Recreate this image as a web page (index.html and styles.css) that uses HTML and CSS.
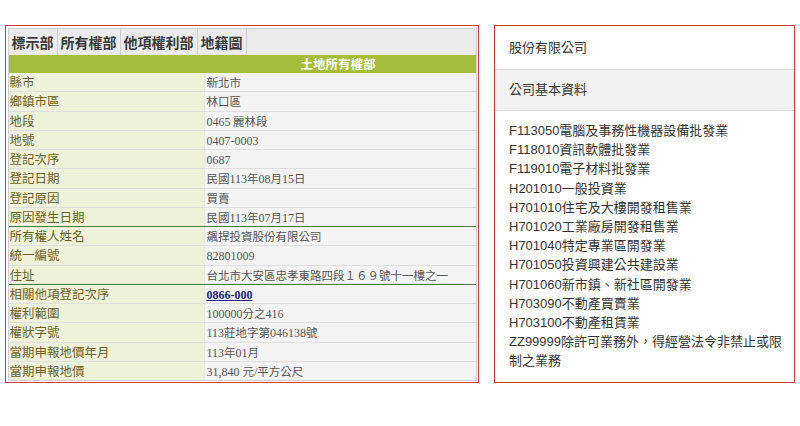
FILE: index.html
```html
<!DOCTYPE html>
<html lang="zh-Hant">
<head>
<meta charset="utf-8">
<link rel="stylesheet" href="styles.css">
</head>
<body>
<div class="page">
  <div class="panel left">
    <div class="frame">
      <div class="tabs">
        <div class="tab">標示部</div>
        <div class="tab">所有權部</div>
        <div class="tab">他項權利部</div>
        <div class="tab">地籍圖</div>
      </div>
      <div class="head">土地所有權部</div>
      <div class="rows">
        <div class="row"><div class="lab">縣市</div><div class="val">新北市</div></div>
        <div class="row"><div class="lab">鄉鎮市區</div><div class="val">林口區</div></div>
        <div class="row"><div class="lab">地段</div><div class="val"><span class="n">0465</span> 麗林段</div></div>
        <div class="row"><div class="lab">地號</div><div class="val"><span class="n">0407-0003</span></div></div>
        <div class="row"><div class="lab">登記次序</div><div class="val"><span class="n">0687</span></div></div>
        <div class="row"><div class="lab">登記日期</div><div class="val">民國<span class="n">113</span>年<span class="n">08</span>月<span class="n">15</span>日</div></div>
        <div class="row"><div class="lab">登記原因</div><div class="val">買賣</div></div>
        <div class="row"><div class="lab">原因發生日期</div><div class="val">民國<span class="n">113</span>年<span class="n">07</span>月<span class="n">17</span>日</div></div>
        <div class="row sep"><div class="lab">所有權人姓名</div><div class="val">飆捍投資股份有限公司</div></div>
        <div class="row"><div class="lab">統一編號</div><div class="val"><span class="n">82801009</span></div></div>
        <div class="row"><div class="lab">住址</div><div class="val">台北市大安區忠孝東路四段１６９號十一樓之一</div></div>
        <div class="row sep"><div class="lab">相關他項登記次序</div><div class="val"><a class="link n">0866-000</a></div></div>
        <div class="row"><div class="lab">權利範圍</div><div class="val"><span class="n">100000</span>分之<span class="n">416</span></div></div>
        <div class="row"><div class="lab">權狀字號</div><div class="val"><span class="n">113</span>莊地字第<span class="n">046138</span>號</div></div>
        <div class="row"><div class="lab">當期申報地價年月</div><div class="val"><span class="n">113</span>年<span class="n">01</span>月</div></div>
        <div class="row"><div class="lab">當期申報地價</div><div class="val"><span class="n">31,840 </span>元<span class="n">/</span>平方公尺</div></div>
      </div>
    </div>
  </div>
  <div class="panel right">
    <div class="item">股份有限公司</div>
    <div class="item gray">公司基本資料</div>
    <div class="list">
      <div>F113050電腦及事務性機器設備批發業</div>
      <div>F118010資訊軟體批發業</div>
      <div>F119010電子材料批發業</div>
      <div>H201010一般投資業</div>
      <div>H701010住宅及大樓開發租售業</div>
      <div>H701020工業廠房開發租售業</div>
      <div>H701040特定專業區開發業</div>
      <div>H701050投資興建公共建設業</div>
      <div>H701060新市鎮、新社區開發業</div>
      <div>H703090不動產買賣業</div>
      <div>H703100不動產租賃業</div>
      <div>ZZ99999除許可業務外，得經營法令非禁止或限制之業務</div>
    </div>
  </div>
</div>
</body>
</html>
```

FILE: styles.css
```css
* { box-sizing: border-box; }
html, body { margin: 0; padding: 0; background: #fff; }
body { font-family: "Liberation Sans", "Noto Sans CJK TC", sans-serif; }
.page {
  display: flex;
  align-items: flex-start;
  gap: 15px;
  padding: 25px 0 0 5px;
}
.panel {
  border: 1.5px solid #cf3a3e;
  height: 358px;
}
.left {
  width: 474px;
  padding: 2px 1px 1px 1.5px;
}
.frame {
  border: 1px solid #cfcfcf;
  background: #ebebeb;
  height: 100%;
  display: flex;
  flex-direction: column;
}
.tabs {
  display: flex;
  height: 26px;
  align-items: stretch;
  padding-left: 0;
  background: #ebebeb;
}
.tab {
  font-family: "Noto Sans CJK TC", sans-serif;
  font-size: 14px;
  font-weight: 700;
  color: #3a3a3a;
  padding: 0 3px;
  display: flex;
  align-items: center;
  border-right: 1px solid #cfcfcf;
}
.head {
  height: 18px;
  background: #a6bc3c;
  color: #fff;
  font-family: "Noto Sans CJK TC", sans-serif;
  font-weight: 700;
  font-size: 12.5px;
  line-height: 18px;
  padding-left: 292px;
}
.rows { display: flex; flex-direction: column; }
.row {
  display: grid;
  grid-template-columns: 196px 1fr;
  height: 19.25px;
  border-top: 1px solid #dedede;
}
.row:first-child { border-top: none; height: 18.25px; }
.row.sep { border-top: 1px solid #4f7a46; }
.lab {
  background: #eef2d9;
  color: #6a6226;
  font-family: "Noto Sans CJK TC", sans-serif;
  font-size: 12.5px;
  line-height: 18px;
  padding-left: 1px;
  border-right: 1px solid #e6e6e6;
  white-space: nowrap;
}
.val {
  background: #f4f4f4;
  color: #555;
  font-family: "Noto Sans CJK TC", sans-serif;
  font-size: 11.5px;
  line-height: 18px;
  padding-left: 2px;
  white-space: nowrap;
  overflow: hidden;
}
.n {
  font-family: "Liberation Serif", serif;
  font-size: 12px;
}
.link {
  color: #23237a;
  text-decoration: underline;
  font-weight: 700;
}
.right {
  width: 301px;
  display: flex;
  flex-direction: column;
  color: #333;
  font-size: 13px;
}
.item {
  height: 44px;
  line-height: 44px;
  padding-left: 14px;
  border-bottom: 1px solid #dddddd;
}
.item.gray {
  background: #f2f2f2;
  height: 41px;
  line-height: 40px;
}
.list {
  padding: 10px 6px 0 14px;
  line-height: 19.2px;
}
```
